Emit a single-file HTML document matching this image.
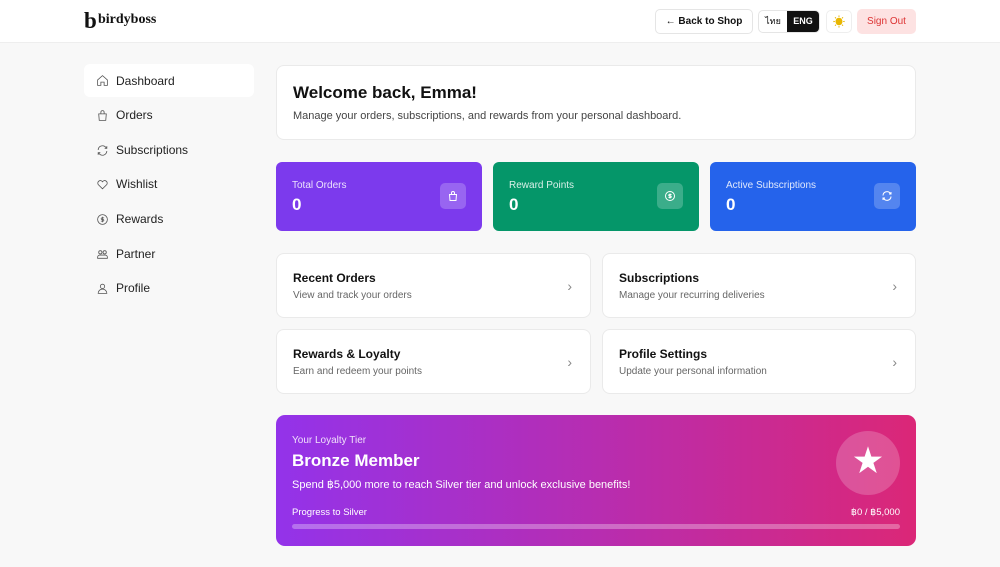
<!DOCTYPE html>
<html><head><meta charset="utf-8"><style>
*{box-sizing:border-box;margin:0;padding:0}
body{width:1000px;height:567px;overflow:hidden;background:#f8f8f8;font-family:"Liberation Sans","Noto Sans CJK SC",sans-serif;color:#111;position:relative}
.hdr{position:absolute;left:0;top:0;width:1000px;height:43px;background:#fff;border-bottom:1px solid #eee}
.abs{position:absolute}
.nav{position:absolute;left:84px;width:170px;height:32px;display:flex;align-items:center;font-size:12px;color:#222;padding-left:12px}
.nav svg{width:13px;height:13px;margin-right:7px;stroke:#555;fill:none;stroke-width:1.5}
.card{position:absolute;background:#fff;border:1px solid #eaeaea;border-radius:8px}
.stat{position:absolute;top:162px;width:206px;height:69px;border-radius:6px;color:#fff}
.stat .l{position:absolute;left:16px;top:18px;font-size:10px;opacity:.85}
.stat .v{position:absolute;left:16px;top:33px;font-size:17px;font-weight:bold}
.stat .i{position:absolute;right:16px;top:21px;width:26px;height:26px;border-radius:5px;background:rgba(255,255,255,.22);display:flex;align-items:center;justify-content:center}
.q .t{position:absolute;left:16px;top:17px;font-size:12px;font-weight:bold}
.q .s{position:absolute;left:16px;top:36px;font-size:10px;color:#666}
.q .c{position:absolute;right:18px;top:24px;color:#888;font-size:14px}
</style></head><body>
<div class="hdr"></div>
<div class="abs" style="left:84px;top:9px;font-family:'Liberation Serif',serif;font-size:23px;font-weight:bold;line-height:24px">b</div>
<div class="abs" style="left:98px;top:12px;font-family:'Liberation Serif',serif;font-size:14px;font-weight:bold">birdyboss</div>
<div class="abs" style="left:655px;top:9px;width:98px;height:25px;border:1px solid #e5e5e5;border-radius:5px;font-size:10px;font-weight:bold;display:flex;align-items:center;justify-content:center;gap:6px">← Back to Shop</div>
<div class="abs" style="left:758px;top:10px;width:62px;height:23px;border:1px solid #e5e5e5;border-radius:5px;font-size:9px;overflow:hidden;display:flex"><span style="width:28px;text-align:center;line-height:21px">ไทย</span><span style="flex:1;background:#111;color:#fff;text-align:center;line-height:21px;font-weight:bold">ENG</span></div>
<div class="abs" style="left:826px;top:10px;width:26px;height:23px;border:1px solid #eee;border-radius:5px;color:#e8b600;text-align:center;line-height:22px;font-size:12px">☀</div>
<div class="abs" style="left:857px;top:9px;width:59px;height:25px;background:#fde2e2;border-radius:5px;color:#d33;font-size:10px;text-align:center;line-height:25px">Sign Out</div>

<div class="nav" style="top:64px;background:#fff;border-radius:6px;height:33px"><svg viewBox="0 0 24 24"><path d="M3 11l9-8 9 8v10h-6v-6H9v6H3z"/></svg>Dashboard</div>
<div class="nav" style="top:99px"><svg viewBox="0 0 24 24"><path d="M5 9h14l-1 12H6z M9 9V6a3 3 0 016 0v3"/></svg>Orders</div>
<div class="nav" style="top:134px"><svg viewBox="0 0 24 24"><path d="M4 11a8 8 0 0114-5l2 2M20 13a8 8 0 01-14 5l-2-2M20 4v4h-4M4 20v-4h4"/></svg>Subscriptions</div>
<div class="nav" style="top:168px"><svg viewBox="0 0 24 24"><path d="M12 20l-8-8a4.5 4.5 0 018-5 4.5 4.5 0 018 5z"/></svg>Wishlist</div>
<div class="nav" style="top:203px"><svg viewBox="0 0 24 24"><circle cx="12" cy="12" r="9"/><path d="M15 9h-4a1.5 1.5 0 000 3h2a1.5 1.5 0 010 3H9M12 7v10"/></svg>Rewards</div>
<div class="nav" style="top:238px"><svg viewBox="0 0 24 24"><circle cx="8" cy="8" r="3"/><circle cx="16" cy="8" r="3"/><path d="M3 19v-2a4 4 0 014-4h10a4 4 0 014 4v2z"/></svg>Partner</div>
<div class="nav" style="top:272px"><svg viewBox="0 0 24 24"><circle cx="12" cy="8" r="4"/><path d="M4 21a8 8 0 0116 0z"/></svg>Profile</div>

<div class="card" style="left:276px;top:65px;width:640px;height:75px">
<div class="abs" style="left:16px;top:17px;font-size:17px;font-weight:bold">Welcome back, Emma!</div>
<div class="abs" style="left:16px;top:44px;font-size:11px;color:#444">Manage your orders, subscriptions, and rewards from your personal dashboard.</div></div>

<div class="stat" style="left:276px;background:#7c3aed"><div class="l">Total Orders</div><div class="v">0</div><div class="i"><svg width="12" height="12" viewBox="0 0 24 24" fill="none" stroke="#fff" stroke-width="2"><path d="M5 9h14l-1 12H6z M9 9V6a3 3 0 016 0v3"/></svg></div></div>
<div class="stat" style="left:493px;background:#059669"><div class="l">Reward Points</div><div class="v">0</div><div class="i"><svg width="12" height="12" viewBox="0 0 24 24" fill="none" stroke="#fff" stroke-width="2"><circle cx="12" cy="12" r="9"/><path d="M15 9h-4a1.5 1.5 0 000 3h2a1.5 1.5 0 010 3H9M12 7v10"/></svg></div></div>
<div class="stat" style="left:710px;background:#2563eb"><div class="l">Active Subscriptions</div><div class="v">0</div><div class="i"><svg width="12" height="12" viewBox="0 0 24 24" fill="none" stroke="#fff" stroke-width="2"><path d="M4 11a8 8 0 0114-5l2 2M20 13a8 8 0 01-14 5l-2-2M20 4v4h-4M4 20v-4h4"/></svg></div></div>

<div class="card q" style="left:276px;top:253px;width:315px;height:65px"><div class="t">Recent Orders</div><div class="s">View and track your orders</div><div class="c">›</div></div>
<div class="card q" style="left:602px;top:253px;width:314px;height:65px"><div class="t">Subscriptions</div><div class="s">Manage your recurring deliveries</div><div class="c">›</div></div>
<div class="card q" style="left:276px;top:329px;width:315px;height:65px"><div class="t">Rewards &amp; Loyalty</div><div class="s">Earn and redeem your points</div><div class="c">›</div></div>
<div class="card q" style="left:602px;top:329px;width:314px;height:65px"><div class="t">Profile Settings</div><div class="s">Update your personal information</div><div class="c">›</div></div>

<div class="abs" style="left:276px;top:415px;width:640px;height:131px;border-radius:9px;background:linear-gradient(90deg,#9333ea,#db2777);color:#fff">
<div class="abs" style="left:16px;top:20px;font-size:10px;opacity:.85">Your Loyalty Tier</div>
<div class="abs" style="left:16px;top:36px;font-size:17px;font-weight:bold">Bronze Member</div>
<div class="abs" style="left:16px;top:63px;font-size:11px">Spend ฿5,000 more to reach Silver tier and unlock exclusive benefits!</div>
<div class="abs" style="left:16px;top:92px;font-size:9.5px">Progress to Silver</div>
<div class="abs" style="right:16px;top:92px;font-size:9.5px">฿0 / ฿5,000</div>
<div class="abs" style="left:16px;top:109px;width:608px;height:5px;border-radius:3px;background:rgba(255,255,255,.3)"></div>
<div class="abs" style="left:560px;top:16px;width:64px;height:64px;border-radius:50%;background:rgba(255,255,255,.2);text-align:center;line-height:62px;font-size:30px">★</div>
</div>
</body></html>
